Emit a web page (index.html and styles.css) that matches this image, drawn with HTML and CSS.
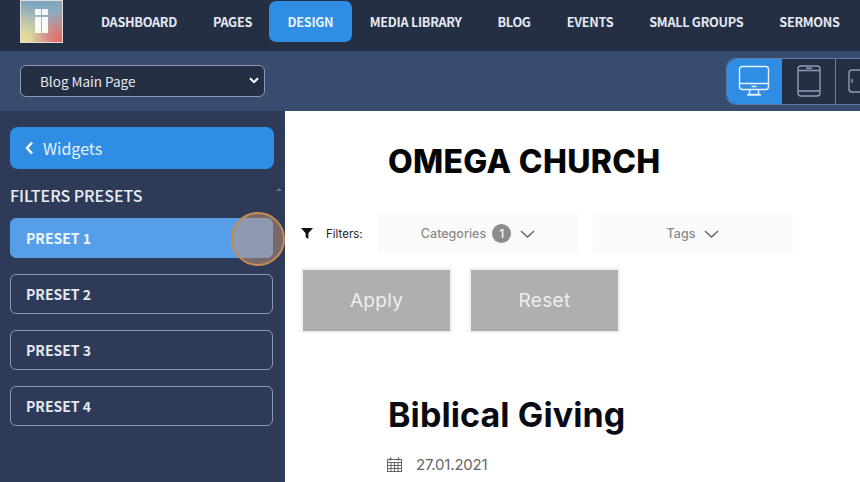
FILE: index.html
```html
<!DOCTYPE html>
<html lang="en">
<head>
  <meta charset="UTF-8">
  <title>Blog Main Page - Design</title>
  <link rel="stylesheet" href="styles.css">
</head>
<body>

<header class="topbar">
  <div class="logo">
    <span class="logo-bars"><i></i><i></i></span>
  </div>
  <nav class="mainnav">
    <a href="#">DASHBOARD</a>
    <a href="#">PAGES</a>
    <a href="#" class="active">DESIGN</a>
    <a href="#">MEDIA LIBRARY</a>
    <a href="#">BLOG</a>
    <a href="#">EVENTS</a>
    <a href="#">SMALL GROUPS</a>
    <a href="#">SERMONS</a>
  </nav>
</header>

<div class="subbar">
  <div class="page-select">
    <span>Blog Main Page</span>
    <svg width="10" height="7" viewBox="0 0 10 7"><path d="M1 1.200l4 4 4-4" fill="none" stroke="#fff" stroke-width="2"/></svg>
  </div>
  <div class="devices">
    <div class="device active">
      <svg width="32" height="32" viewBox="0 0 32 32" fill="none" stroke="#e6f1fb" stroke-width="1.400">
        <rect x="1.500" y="1.500" width="29" height="23" rx="3"/>
        <path d="M1.500 18.500h29M13.500 21.500h5M12 24.500l-1 5h10l-1-5M9 30h14"/>
      </svg>
    </div>
    <div class="device">
      <svg width="24" height="32" viewBox="0 0 24 32" fill="none" stroke="#8d9db8" stroke-width="1.400">
        <rect x="1" y="1" width="22" height="30" rx="3"/>
        <path d="M1 5.500h22M1 26h22M9 3.300h6"/>
      </svg>
    </div>
    <div class="device">
      <svg width="32" height="24" viewBox="0 0 32 24" fill="none" stroke="#8d9db8" stroke-width="1.400">
        <rect x="1" y="1" width="30" height="22" rx="3"/>
        <path d="M4 10v4"/>
      </svg>
    </div>
  </div>
</div>

<div class="workspace">
  <aside class="sidebar">
    <a href="#" class="back-btn">
      <svg width="9" height="14" viewBox="0 0 9 14"><path d="M7 1.500L2 7l5 5.500" fill="none" stroke="#fff" stroke-width="2.400"/></svg>
      Widgets
    </a>
    <div class="side-head">
      <h3>FILTERS PRESETS</h3>
      <span class="scroll-up"></span>
    </div>
    <a href="#" class="preset selected">PRESET 1</a>
    <a href="#" class="preset">PRESET 2</a>
    <a href="#" class="preset">PRESET 3</a>
    <a href="#" class="preset">PRESET 4</a>
  </aside>

  <main class="content">
    <h1 class="church">OMEGA CHURCH</h1>

    <div class="filters">
      <svg class="funnel" width="12" height="11" viewBox="0 0 12 11"><path d="M0 0h12L7.400 5.200V11L4.600 9.200v-4z" fill="#111"/></svg>
      <span class="filters-label">Filters:</span>
      <div class="filter-box">
        Categories <span class="count">1</span>
        <svg width="15" height="8" viewBox="0 0 15 8"><path d="M1 1l6.500 6 6.500-6" fill="none" stroke="#666" stroke-width="1.500"/></svg>
      </div>
      <div class="filter-box">
        Tags
        <svg width="15" height="8" viewBox="0 0 15 8"><path d="M1 1l6.500 6 6.500-6" fill="none" stroke="#666" stroke-width="1.500"/></svg>
      </div>
    </div>

    <div class="actions">
      <button>Apply</button>
      <button>Reset</button>
    </div>

    <h2 class="post-title">Biblical Giving</h2>
    <div class="post-date">
      <svg width="15" height="15" viewBox="0 0 15 15" fill="none" stroke="#666" stroke-width="1">
        <rect x="0.500" y="2.500" width="14" height="12"/>
        <path d="M0.500 5.500h14M0.500 8.500h14M0.500 11.500h14M4 5.500v9M7.500 5.500v9M11 5.500v9"/>
        <path d="M3.500 0.500v3M11.500 0.500v3" stroke-width="1.600"/>
      </svg>
      27.01.2021
    </div>
  </main>
</div>

<div class="click-ring"></div>

</body>
</html>
```

FILE: styles.css
```css
html, body { height: 100%; }
body { margin: 0; overflow: hidden; background: #fff; font-family: "Noto Sans CJK SC", "Noto Sans", sans-serif; color: #fff; }
a { color: inherit; text-decoration: none; }

.topbar { height: 51px; background: #242f44; display: flex; }
.logo { width: 43px; height: 43px; margin-left: 20px; flex: none; box-sizing: border-box; border: 1px solid #e6dcd8; display: flex; align-items: center; justify-content: center; background: radial-gradient(circle at 100% 100%, #f0605a 0, rgba(240, 96, 90, 0) 55%), radial-gradient(circle at 0 100%, #f3e38e 0, rgba(243, 227, 142, 0) 65%), linear-gradient(#7ea6bf, #a9bcc2); }
.logo-bars { display: flex; gap: 1.500px; margin-top: -2px; }
.logo-bars i { width: 5.500px; height: 24px; background: linear-gradient(#fff 0 6px, transparent 6px 8px, #fff 8px); opacity: .92; }
.mainnav { display: flex; margin-left: 20px; height: 41px; margin-top: 1px; }
.mainnav a { display: flex; flex: none; align-items: center; padding: 0 18px; font-size: 12.700px; font-weight: 700; letter-spacing: -.3px; white-space: nowrap; color: #e4e9f1; }
.mainnav a.active { background: #2f8de4; border-radius: 7px; color: #e8f2fc; margin: 0 0 0 -1px; padding: 0 18.500px; }

.subbar { height: 60px; background: #384c70; display: flex; align-items: center; justify-content: space-between; }
.page-select { width: 245px; height: 32px; box-sizing: border-box; margin-left: 20px; margin-top: -1px; padding: 0 5px 0 19px; background: #242f44; border: 1px solid #8a9ab5; border-radius: 6px; display: flex; align-items: center; justify-content: space-between; font-size: 13.500px; color: #e4e9f1; }
.devices { display: flex; width: 134px; height: 47px; border-radius: 10px 0 0 10px; overflow: hidden; background: #242f44; flex: none; box-sizing: border-box; border: 1px solid #5f7ba6; border-right: 0; }
.device { flex: none; width: 54px; display: flex; align-items: center; border-right: 1px solid #6a7d9c; box-sizing: border-box; justify-content: center; }
.device.active { background: #2f8de4; width: 55px; }
.device:last-child { justify-content: flex-start; padding-left: 12px; border: 0; }

.workspace { display: flex; height: 371px; }
.sidebar { width: 285px; flex: none; box-sizing: border-box; padding: 16px 11px 0 10px; background: #2e3b58; display: flex; flex-direction: column; }
.back-btn { height: 42px; width: 264px; background: #2f8de4; border-radius: 8px; display: flex; align-items: center; gap: 9px; padding: 0 0 1px 15px; box-sizing: border-box; font-size: 16px; color: #e8f2fc; }
.side-head { height: 49px; display: flex; align-items: center; justify-content: space-between; }
.side-head h3 { margin: 3px 0 0; font-size: 16px; font-weight: 500; color: #e9edf3; }
.scroll-up { border: 3px solid transparent; border-bottom: 3px solid #66748f; border-top: 0; margin-right: -8px; margin-top: -9px; }
.preset { height: 40px; width: 263px; box-sizing: border-box; margin-bottom: 16px; padding: 0 0 1px 15px; display: flex; align-items: center; border: 1px solid #8a9ab5; border-radius: 6px; font-size: 14px; font-weight: 700; color: #e4e9f1; }
.preset.selected { background: #569fe8; border-color: #569fe8; color: #eef5fc; }

.content { flex: 1; min-width: 0; padding-left: 16px; color: #111; font-family: "Inter", "Open Sans", sans-serif; }
.church { margin: 31px 0 0 87px; height: 40px; line-height: 40px; font-size: 32px; font-weight: 800; letter-spacing: .3px; color: #050505; }
.filters { margin-top: 32px; height: 39px; display: flex; align-items: center; font-size: 11.500px; }
.funnel { margin-right: 13px; }
.filters-label { width: 52px; color: #222; }
.filter-box { width: 200px; height: 39px; margin-right: 15px; background: #fafafa; display: flex; align-items: center; justify-content: center; gap: 9px; font-size: 12.500px; font-weight: 500; color: #8a8a8a; }
.count { width: 19px; height: 19px; margin-left: -3px; border-radius: 50%; background: #8c8c8c; color: #fff; font-size: 12px; display: flex; align-items: center; justify-content: center; }
.actions { margin-top: 15px; display: flex; gap: 17px; }
.actions button { width: 151px; height: 65px; border: 2px solid #f0f0f0; background: #afafaf; color: #eee; font-family: inherit; font-size: 19px; letter-spacing: .3px; }
.post-title { margin: 59px 0 0 87px; height: 46px; line-height: 46px; font-size: 34px; font-weight: 700; letter-spacing: .1px; color: #0a0a14; }
.post-date { margin: 17px 0 0 86px; display: flex; align-items: center; gap: 14px; font-size: 15px; letter-spacing: -.2px; color: #666; }

.click-ring { position: absolute; left: 231px; top: 212px; width: 54px; height: 54px; box-sizing: border-box; border-radius: 50%; border: 2px solid #c98a54; background: rgba(200, 150, 120, .5); }
```
